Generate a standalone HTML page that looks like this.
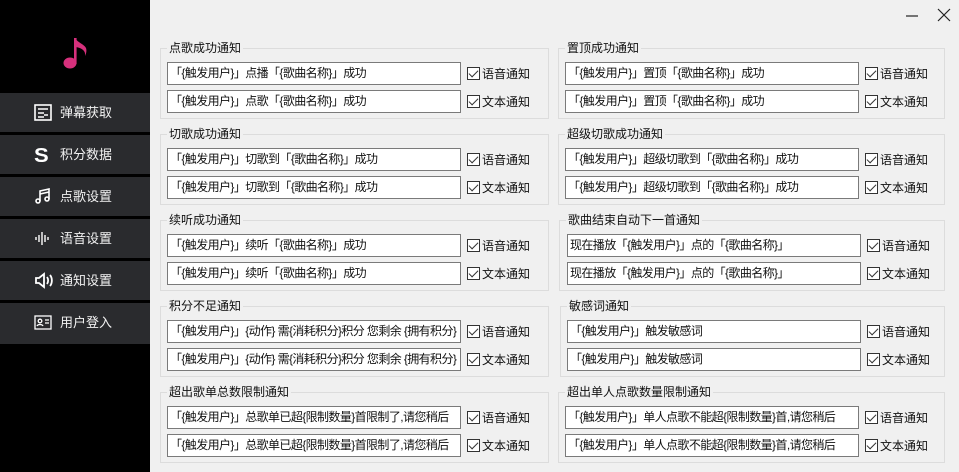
<!DOCTYPE html>
<html><head><meta charset="utf-8"><style>
*{margin:0;padding:0;box-sizing:border-box}
body{width:959px;height:472px;overflow:hidden;background:#f0f0f0;font-family:"Liberation Sans","Noto Sans CJK SC","WenQuanYi Zen Hei",sans-serif;font-size:12px;color:#111;position:relative}
.side{position:absolute;left:0;top:0;width:150px;height:472px;background:#000}
.mi{position:absolute;left:0;width:150px;height:39px;background:#2a2b2e;color:#f2f2f2;font-size:13px;line-height:39px}
.mi span{position:absolute;left:60px}
.mi svg{position:absolute;left:34px;top:11px}
.g{position:absolute;border:1px solid #dcdcdc;height:71px}
.t{position:absolute;top:-9px;left:6px;background:#f0f0f0;padding:0 2px;line-height:16px;font-size:12px}
.in{position:absolute;height:23px;background:#fff;border:1px solid #7a7a7a;line-height:21px;padding-left:2px;white-space:nowrap;overflow:hidden;font-size:12px;letter-spacing:-0.6px}
.cb{position:absolute;line-height:16px;font-size:12px;white-space:nowrap}
.cb i{display:inline-block;width:13px;height:13px;border:1px solid #333;background:#fff;vertical-align:-2px;margin-right:2px;position:relative}
.cb i:after{content:"";position:absolute;left:3px;top:0px;width:4px;height:8px;border:solid #333;border-width:0 1.5px 1.5px 0;transform:rotate(45deg)}
</style></head><body>
<div class="side">
<svg style="position:absolute;left:62px;top:35px" width="30" height="36" viewBox="0 0 30 36"><ellipse cx="8" cy="28" rx="6.5" ry="5.5" fill="#d6307c"/><rect x="12" y="3" width="2.6" height="26" fill="#d6307c"/><path d="M13 3 C16 8 22 9 24 13 C25 16 24 19 23 21 C24 16 20 13 14 12Z" fill="#d6307c"/></svg>
<div class="mi" style="top:93px"><svg width="18" height="17" viewBox="0 0 18 17" fill="none" stroke="#fff" stroke-width="1.6"><rect x="1" y="1" width="16" height="15"/><path d="M4 5h10M4 9h6M10 11h4M4 13h6"/></svg><span>弹幕获取</span></div>
<div class="mi" style="top:135px"><svg width="18" height="17" viewBox="0 0 18 17"><text x="0" y="16" font-size="20" font-weight="bold" fill="#fff" font-family="Liberation Sans" transform="scale(1.1,1)">S</text></svg><span>积分数据</span></div>
<div class="mi" style="top:177px"><svg width="18" height="17" viewBox="0 0 18 17" fill="none" stroke="#fff" stroke-width="1.6"><path d="M6 13V3l9-2v10"/><circle cx="4" cy="13" r="2"/><circle cx="13" cy="11" r="2"/><path d="M6 6l9-2"/></svg><span>点歌设置</span></div>
<div class="mi" style="top:219px"><svg width="18" height="17" viewBox="0 0 18 17" stroke="#fff" stroke-width="1.4"><path d="M2 7v3M5 5v7M8 2v13M11 5v7M14 7v3"/></svg><span>语音设置</span></div>
<div class="mi" style="top:261px"><svg width="20" height="17" viewBox="0 0 20 17" fill="none" stroke="#fff" stroke-width="1.8"><path d="M2 6h3l5-4v13l-5-4H2z"/><path d="M13 5c1.5 2 1.5 5 0 7M16 3c2.5 3 2.5 8 0 11"/></svg><span>通知设置</span></div>
<div class="mi" style="top:303px;height:41px"><svg width="18" height="17" viewBox="0 0 18 17" fill="none" stroke="#fff" stroke-width="1.3"><rect x="1" y="2" width="16" height="13"/><circle cx="6" cy="7" r="1.8"/><path d="M3 12c1-2 5-2 6 0M11 6h4M11 9h4"/></svg><span>用户登入</span></div>
</div>
<svg style="position:absolute;left:905px;top:9px" width="14" height="14"><path d="M1 7h12" stroke="#222" stroke-width="1.2"/></svg>
<svg style="position:absolute;left:937px;top:8px" width="14" height="14"><path d="M1 1l12 12M13 1L1 13" stroke="#222" stroke-width="1.2"/></svg>

<div class="g" style="left:160px;top:48px;width:389px"><div class="t">点歌成功通知</div></div>
<div class="in" style="left:167px;top:62px;width:294px">「{触发用户}」点播「{歌曲名称}」成功</div>
<div class="in" style="left:167px;top:90px;width:294px">「{触发用户}」点歌「{歌曲名称}」成功</div>
<div class="cb" style="left:467px;top:66px"><i></i>语音通知</div>
<div class="cb" style="left:467px;top:94px"><i></i>文本通知</div>

<div class="g" style="left:160px;top:134px;width:389px"><div class="t">切歌成功通知</div></div>
<div class="in" style="left:167px;top:148px;width:294px">「{触发用户}」切歌到「{歌曲名称}」成功</div>
<div class="in" style="left:167px;top:176px;width:294px">「{触发用户}」切歌到「{歌曲名称}」成功</div>
<div class="cb" style="left:467px;top:152px"><i></i>语音通知</div>
<div class="cb" style="left:467px;top:180px"><i></i>文本通知</div>

<div class="g" style="left:160px;top:220px;width:389px"><div class="t">续听成功通知</div></div>
<div class="in" style="left:167px;top:234px;width:294px">「{触发用户}」续听「{歌曲名称}」成功</div>
<div class="in" style="left:167px;top:262px;width:294px">「{触发用户}」续听「{歌曲名称}」成功</div>
<div class="cb" style="left:467px;top:238px"><i></i>语音通知</div>
<div class="cb" style="left:467px;top:266px"><i></i>文本通知</div>

<div class="g" style="left:160px;top:306px;width:389px"><div class="t">积分不足通知</div></div>
<div class="in" style="left:167px;top:320px;width:294px">「{触发用户}」{动作} 需{消耗积分}积分 您剩余 {拥有积分}</div>
<div class="in" style="left:167px;top:348px;width:294px">「{触发用户}」{动作} 需{消耗积分}积分 您剩余 {拥有积分}</div>
<div class="cb" style="left:467px;top:324px"><i></i>语音通知</div>
<div class="cb" style="left:467px;top:352px"><i></i>文本通知</div>

<div class="g" style="left:160px;top:392px;width:389px"><div class="t">超出歌单总数限制通知</div></div>
<div class="in" style="left:167px;top:406px;width:294px">「{触发用户}」总歌单已超{限制数量}首限制了,请您稍后</div>
<div class="in" style="left:167px;top:434px;width:294px">「{触发用户}」总歌单已超{限制数量}首限制了,请您稍后</div>
<div class="cb" style="left:467px;top:410px"><i></i>语音通知</div>
<div class="cb" style="left:467px;top:438px"><i></i>文本通知</div>

<div class="g" style="left:558px;top:48px;width:387px"><div class="t">置顶成功通知</div></div>
<div class="in" style="left:565px;top:62px;width:294px">「{触发用户}」置顶「{歌曲名称}」成功</div>
<div class="in" style="left:565px;top:90px;width:294px">「{触发用户}」置顶「{歌曲名称}」成功</div>
<div class="cb" style="left:865px;top:66px"><i></i>语音通知</div>
<div class="cb" style="left:865px;top:94px"><i></i>文本通知</div>

<div class="g" style="left:558px;top:134px;width:387px"><div class="t">超级切歌成功通知</div></div>
<div class="in" style="left:565px;top:148px;width:294px">「{触发用户}」超级切歌到「{歌曲名称}」成功</div>
<div class="in" style="left:565px;top:176px;width:294px">「{触发用户}」超级切歌到「{歌曲名称}」成功</div>
<div class="cb" style="left:865px;top:152px"><i></i>语音通知</div>
<div class="cb" style="left:865px;top:180px"><i></i>文本通知</div>

<div class="g" style="left:559px;top:220px;width:386px"><div class="t">歌曲结束自动下一首通知</div></div>
<div class="in" style="left:567px;top:234px;width:294px">现在播放「{触发用户}」点的「{歌曲名称}」</div>
<div class="in" style="left:567px;top:262px;width:294px">现在播放「{触发用户}」点的「{歌曲名称}」</div>
<div class="cb" style="left:867px;top:238px"><i></i>语音通知</div>
<div class="cb" style="left:867px;top:266px"><i></i>文本通知</div>

<div class="g" style="left:560px;top:306px;width:385px"><div class="t">敏感词通知</div></div>
<div class="in" style="left:567px;top:320px;width:294px">「{触发用户}」触发敏感词</div>
<div class="in" style="left:567px;top:348px;width:294px">「{触发用户}」触发敏感词</div>
<div class="cb" style="left:867px;top:324px"><i></i>语音通知</div>
<div class="cb" style="left:867px;top:352px"><i></i>文本通知</div>

<div class="g" style="left:558px;top:392px;width:387px"><div class="t">超出单人点歌数量限制通知</div></div>
<div class="in" style="left:565px;top:406px;width:294px">「{触发用户}」单人点歌不能超{限制数量}首,请您稍后</div>
<div class="in" style="left:565px;top:434px;width:294px">「{触发用户}」单人点歌不能超{限制数量}首,请您稍后</div>
<div class="cb" style="left:865px;top:410px"><i></i>语音通知</div>
<div class="cb" style="left:865px;top:438px"><i></i>文本通知</div>
</body></html>
